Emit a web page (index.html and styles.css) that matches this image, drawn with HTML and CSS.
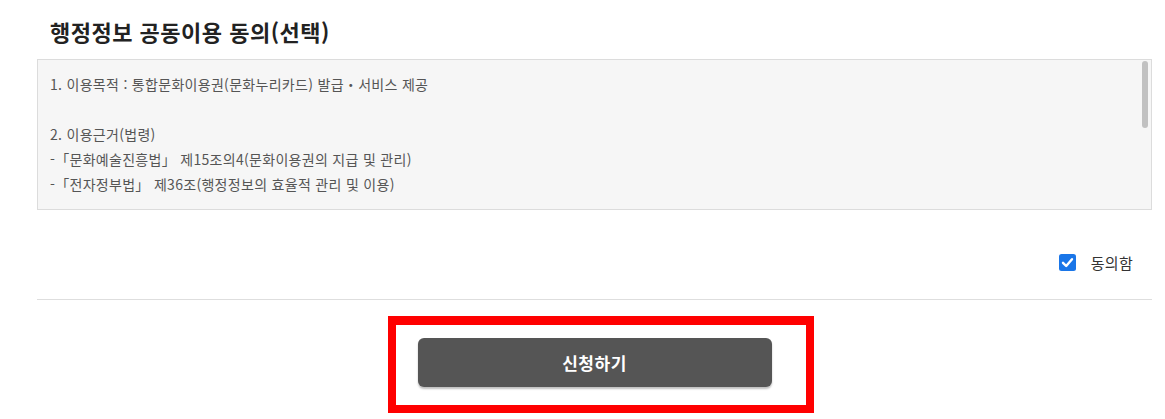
FILE: index.html
```html
<!DOCTYPE html>
<html lang="ko">
<head>
<meta charset="utf-8">
<title>행정정보 공동이용 동의</title>
<link rel="stylesheet" href="styles.css">
</head>
<body>
<div class="page">
  <h2 class="title">행정정보 공동이용 동의(선택)</h2>
  <div class="terms-frame">
    <div class="terms">
      <p>1. 이용목적 : 통합문화이용권(문화누리카드) 발급・서비스 제공</p>
      <p class="blank">&nbsp;</p>
      <p>2. 이용근거(법령)</p>
      <p>-「문화예술진흥법」 제15조의4(문화이용권의 지급 및 관리)</p>
      <p>-「전자정부법」 제36조(행정정보의 효율적 관리 및 이용)</p>
    </div>
    <span class="scroll-thumb"></span>
  </div>
  <div class="agree-row">
    <label class="agree">
      <span class="check">
        <svg viewBox="0 0 17 17" width="17" height="17"><rect x="0" y="0" width="17" height="17" rx="2.5" fill="#1a76e8"/><path d="M4 8.8 L7.2 12 L13 5.2" fill="none" stroke="#fff" stroke-width="2.4" stroke-linecap="round" stroke-linejoin="round"/></svg>
      </span>
      <span class="agree-text">동의함</span>
    </label>
  </div>
  <div class="actions">
    <div class="btn-wrap">
      <button class="submit" type="button">신청하기</button>
      <span class="highlight"></span>
    </div>
  </div>
</div>
</body>
</html>
```

FILE: styles.css
```css
html, body {
  margin: 0;
  padding: 0;
  background: #fff;
}
body {
  font-family: "Noto Sans CJK KR", "Noto Sans", sans-serif;
}
.page {
  margin-left: 37px;
  width: 1115px;
}
.title {
  margin: 0;
  padding: 16px 0 0 13px;
  font-size: 22px;
  line-height: 31px;
  font-weight: 700;
  color: #222;
  letter-spacing: 0.5px;
}
.terms-frame {
  position: relative;
  margin-top: 12px;
}
.terms {
  box-sizing: border-box;
  height: 151px;
  border: 1px solid #dcdcdc;
  background: #f6f6f6;
  padding: 12px 12px 20px 12px;
  overflow: hidden;
}
.terms p {
  margin: 0;
  font-size: 14px;
  line-height: 25px;
  color: #555;
  letter-spacing: 0.3px;
}
.scroll-thumb {
  position: absolute;
  top: 2px;
  right: 4px;
  width: 6px;
  height: 67px;
  border-radius: 3px;
  background: #c1c1c1;
}
.agree-row {
  display: flex;
  justify-content: flex-end;
  padding: 40px 19px 24px 0;
  border-bottom: 1px solid #dedede;
}
.agree {
  display: flex;
  align-items: center;
  gap: 14px;
  height: 25px;
}
.check {
  display: block;
  width: 17px;
  height: 17px;
  margin-right: 1px;
}
.check svg {
  display: block;
}
.agree-text {
  font-size: 15px;
  color: #333;
  line-height: 25px;
  letter-spacing: 0.3px;
}
.actions {
  display: flex;
  justify-content: center;
  padding: 38px 0 40px;
}
.btn-wrap {
  position: relative;
}
.submit {
  display: block;
  width: 354px;
  height: 49px;
  border: 0;
  border-radius: 6px;
  background: #555;
  color: #fff;
  font-family: "Noto Sans CJK KR", "Noto Sans", sans-serif;
  font-size: 17px;
  font-weight: 700;
  letter-spacing: 0.5px;
  box-shadow: 0 2px 2px rgba(0, 0, 0, 0.25);
}
.highlight {
  position: absolute;
  left: -30px;
  top: -22px;
  width: 426px;
  height: 97px;
  box-sizing: border-box;
  border: 8px solid #f00;
  border-top-width: 9px;
  pointer-events: none;
}
```
